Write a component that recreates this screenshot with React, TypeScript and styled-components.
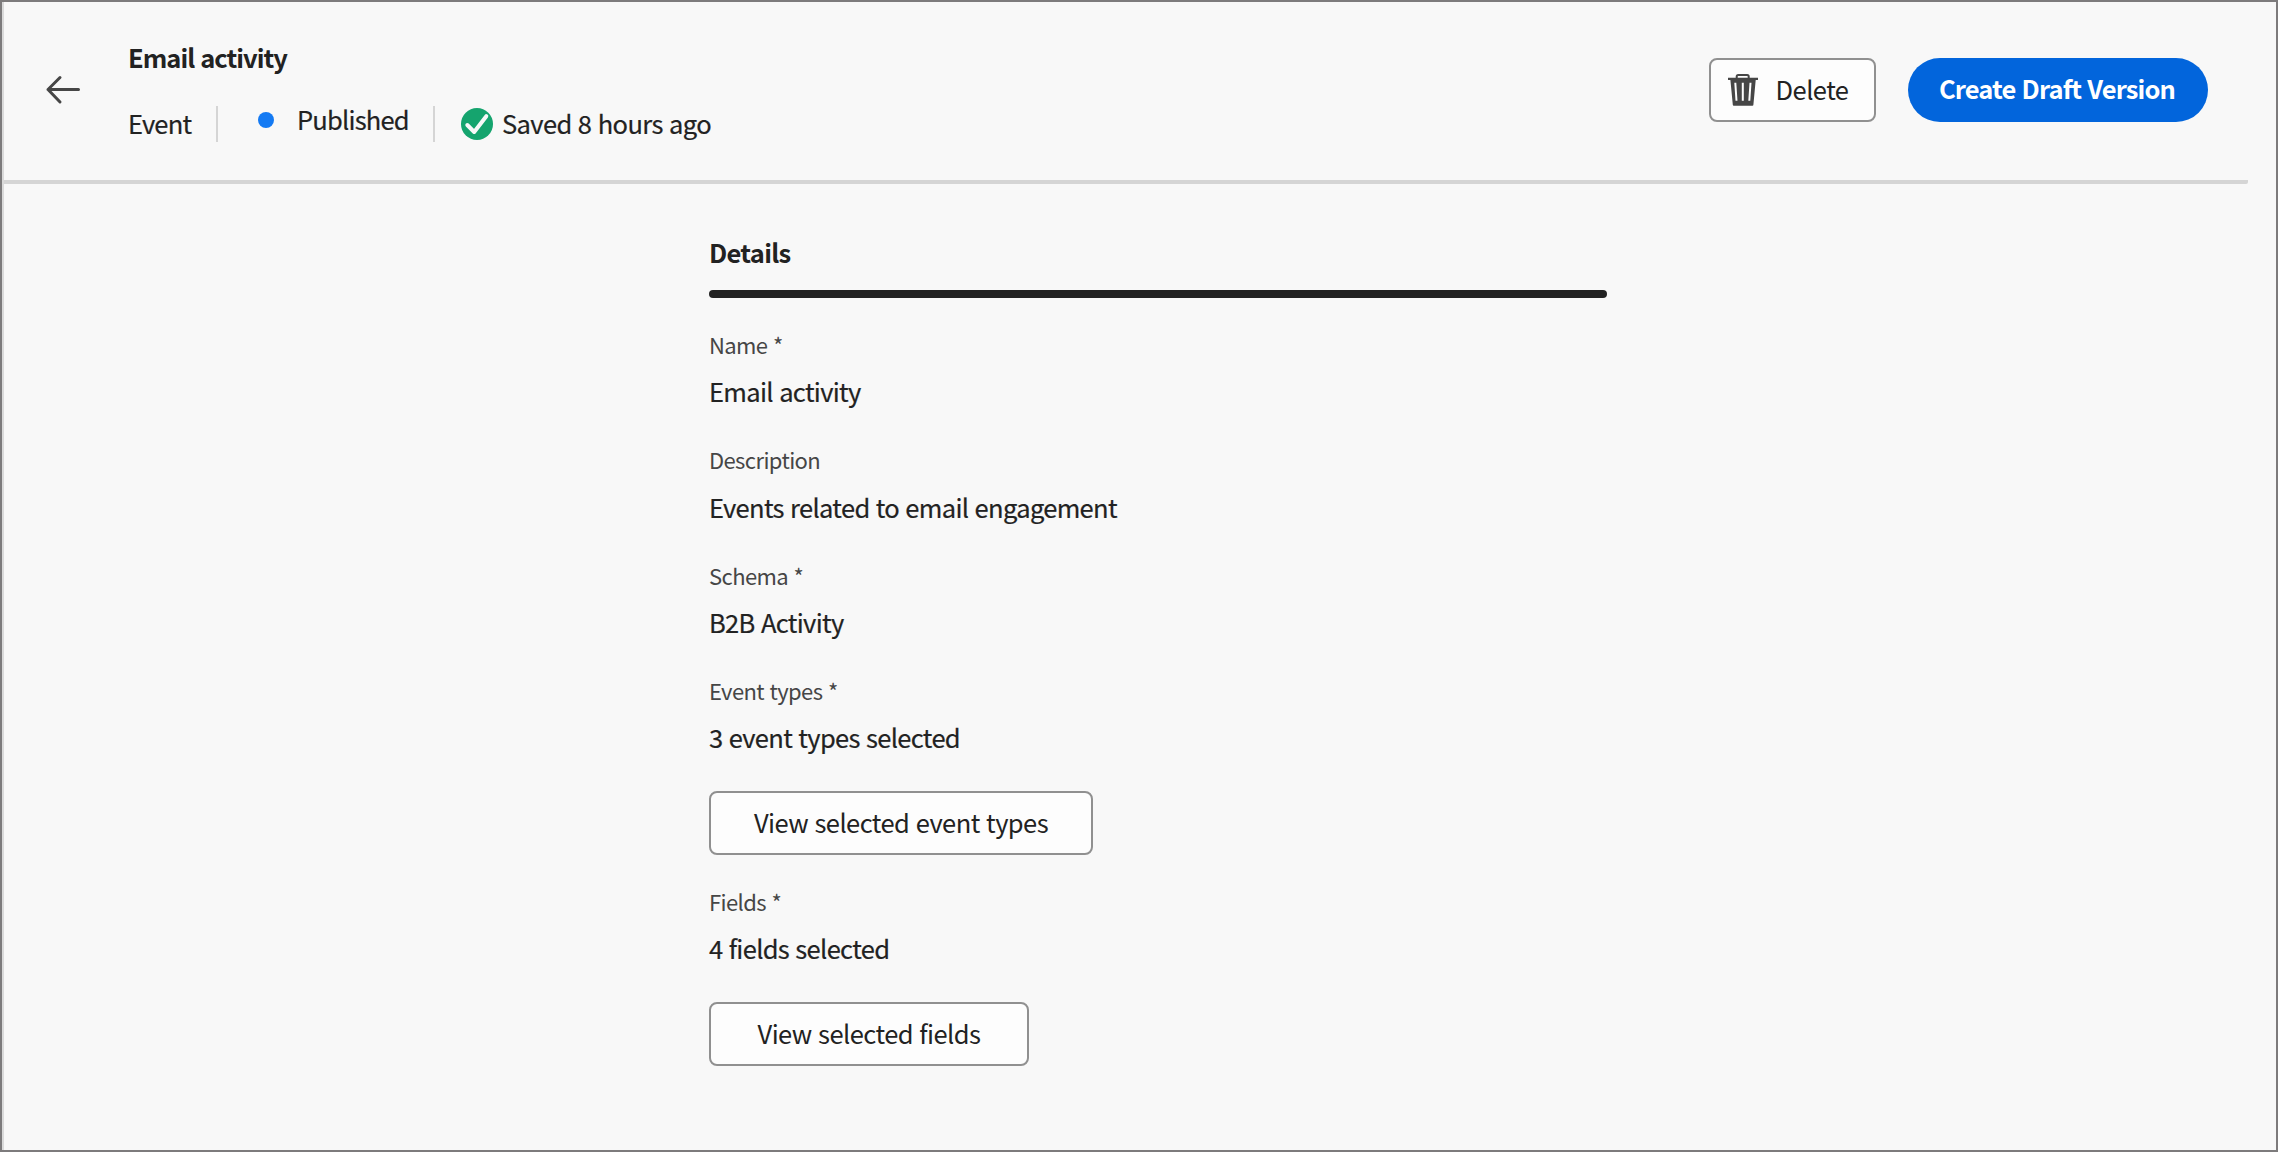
import React from 'react';
import styled, { createGlobalStyle, css } from 'styled-components';

const Global = createGlobalStyle`
  *, *::before, *::after { box-sizing: border-box; }
  body { margin: 0; }
`;

const Page = styled.div`
  width: 2278px;
  height: 1152px;
  border: 2px solid #7d7b7c;
  background: #f8f8f8;
  color: #222222;
  font-family: 'Noto Sans CJK SC', 'Noto Sans', sans-serif;
  font-size: 25.5px;
  line-height: 32px;
  letter-spacing: -0.67px;
  word-spacing: 1.2px;
  white-space: nowrap;
  overflow: hidden;
`;

const Panel = styled.div`
  height: 100%;
  border-left: 2px solid #dadada;
`;

const Header = styled.header`
  display: flex;
  align-items: flex-start;
  width: 2244px;
  height: 182px;
  padding: 39px 40px 0 39px;
  border-bottom: 4px solid #d5d5d5;
  border-radius: 0 2px 2px 0;
`;

const BackButton = styled.button`
  display: flex;
  width: 40px;
  height: 40px;
  margin: 28px 45px 0 0;
  padding: 0;
  border: 0;
  background: none;
`;

const Heading = styled.div`
  display: flex;
  flex-direction: column;
  gap: 33px;
  flex: 1;
`;

const Title = styled.h1`
  margin: 0;
  font-size: 25.5px;
  font-weight: 700;
  line-height: 32px;
  letter-spacing: -0.98px;
`;

const StatusRow = styled.div`
  display: flex;
  align-items: flex-start;
  height: 36px;
  -webkit-text-stroke: 0.2px #222222;
`;

const Kind = styled.span`
  width: 88px;
  padding-top: 1px;
  letter-spacing: -0.8px;
`;

const Divider = styled.span`
  width: 2px;
  height: 36px;
  background: #d5d5d5;
`;

const Published = styled.span`
  display: flex;
  align-items: center;
  gap: 23px;
  width: 215px;
  height: 32px;
  margin-top: -3px;
  padding-left: 40px;
  letter-spacing: -0.8px;
`;

const Dot = styled.i`
  width: 16px;
  height: 16px;
  margin-top: 2px;
  border-radius: 50%;
  background: #147af3;
`;

const Saved = styled.span`
  display: flex;
  gap: 9px;
  padding: 1px 0 0 26px;
  letter-spacing: -0.62px;

  svg {
    margin-top: 1px;
  }
`;

const Actions = styled.div`
  display: flex;
  gap: 32px;
  margin-top: 17px;
`;

const Button = styled.button<{ $width: number; $variant?: 'accent' | 'icon' }>`
  display: flex;
  align-items: center;
  justify-content: center;
  width: ${(p) => p.$width}px;
  height: 64px;
  padding: 0 0 2px;
  border: 2px solid #909090;
  border-radius: 8px;
  background: #fdfdfd;
  color: #222222;
  font: inherit;
  letter-spacing: -0.55px;
  word-spacing: 1.2px;
  ${(p) =>
    p.$variant === 'icon' &&
    css`
      padding: 0 10px 0 0;
    `}
  ${(p) =>
    p.$variant === 'accent' &&
    css`
      border: 0;
      border-radius: 32px;
      background: #0265dc;
      color: #ffffff;
      font-weight: 700;
      letter-spacing: -0.85px;
      padding: 0 2px 5px 0;
    `}
`;

const DeleteLabel = styled.span`
  margin-left: 17px;
  padding-bottom: 2px;
`;

const Details = styled.main`
  width: 898px;
  margin: 52px 0 0 705px;
`;

const SectionTitle = styled.h2`
  margin: 0;
  padding-bottom: 22px;
  font-size: 25.5px;
  font-weight: 700;
  line-height: 32px;
  letter-spacing: -0.7px;
`;

const Rule = styled.div`
  height: 8px;
  margin-bottom: 32.1px;
  border-radius: 4px;
  background: #222222;
`;

const Field = styled.section<{ $action?: boolean }>`
  margin-bottom: ${(p) => (p.$action ? 32.4 : 38.2)}px;
`;

const Label = styled.div`
  margin-bottom: 17.2px;
  color: #464646;
  font-size: 22px;
  line-height: 28px;
  letter-spacing: -0.6px;
`;

const Value = styled.div<{ $spaced?: boolean }>`
  margin-bottom: ${(p) => (p.$spaced ? 37.4 : 0)}px;
  -webkit-text-stroke: 0.2px #222222;
`;

const BackIcon = () => (
  <svg width="40" height="40" viewBox="0 0 40 40" fill="none" stroke="#464646" strokeWidth="3" strokeLinecap="round" strokeLinejoin="round">
    <path d="M35.500 20.500H5M17 8.500L5 20.500L17 33" />
  </svg>
);

const TrashIcon = () => (
  <svg width="32" height="34" viewBox="0 0 32 34">
    <path d="M9.700 5V3.500A1.500 1.500 0 0 1 11.200 2H20.200A1.500 1.500 0 0 1 21.700 3.500V5" fill="none" stroke="#464646" strokeWidth="2" />
    <path fill="#464646" d="M1 4.800H31V7H28.700L26.400 31.800A1 1 0 0 1 25.400 32.800H6.800A1 1 0 0 1 5.800 31.800L3.400 7H1Z" />
    <path d="M8.300 9.800L9.500 27.700M15.800 9.800V27.700M23.500 9.800L22.300 27.700" stroke="#fdfdfd" strokeWidth="2" />
  </svg>
);

const CheckIcon = () => (
  <svg width="32" height="32" viewBox="0 0 32 32">
    <circle cx="16" cy="16" r="16" fill="#15a46e" />
    <path d="M6.300 17L13.200 24L25.300 8.200" fill="none" stroke="#f8f8f8" strokeWidth="4" strokeLinecap="round" strokeLinejoin="round" />
  </svg>
);

const fields = [
  { label: 'Name *', value: 'Email activity' },
  { label: 'Description', value: 'Events related to email engagement' },
  { label: 'Schema *', value: 'B2B Activity' },
  { label: 'Event types *', value: '3 event types selected', action: 'View selected event types', width: 384 },
  { label: 'Fields *', value: '4 fields selected', action: 'View selected fields', width: 320 },
];

export default function App() {
  return (
    <Page>
      <Global />
      <Panel>
        <Header>
          <BackButton aria-label="Back"><BackIcon /></BackButton>
          <Heading>
            <Title>Email activity</Title>
            <StatusRow>
              <Kind>Event</Kind>
              <Divider />
              <Published><Dot />Published</Published>
              <Divider />
              <Saved><CheckIcon />Saved 8 hours ago</Saved>
            </StatusRow>
          </Heading>
          <Actions>
            <Button $width={167} $variant="icon"><TrashIcon /><DeleteLabel>Delete</DeleteLabel></Button>
            <Button $width={300} $variant="accent">Create Draft Version</Button>
          </Actions>
        </Header>
        <Details>
          <SectionTitle>Details</SectionTitle>
          <Rule />
          {fields.map((f) => (
            <Field key={f.label} $action={!!f.action}>
              <Label>{f.label}</Label>
              <Value $spaced={!!f.action}>{f.value}</Value>
              {f.action && <Button $width={f.width!}>{f.action}</Button>}
            </Field>
          ))}
        </Details>
      </Panel>
    </Page>
  );
}
